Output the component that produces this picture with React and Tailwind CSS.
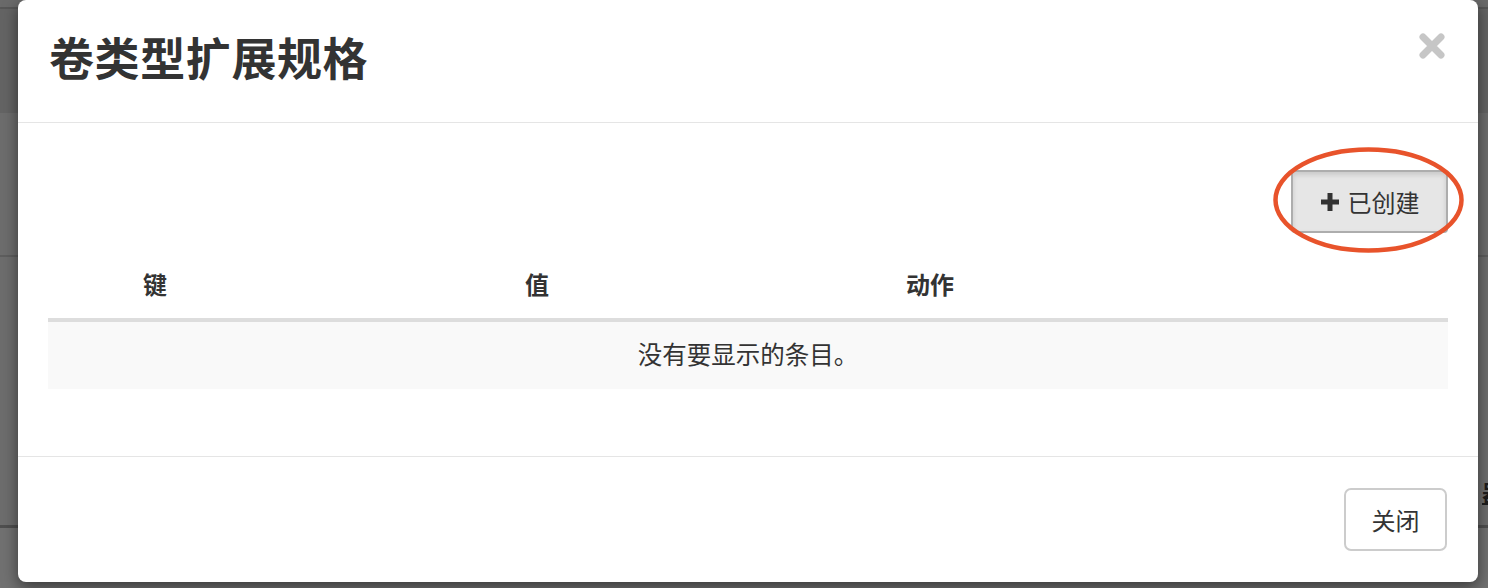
import React from "react";

const FONT = "font-['Noto_Sans_CJK_SC','Liberation_Sans',sans-serif]";

function CloseIcon() {
  return (
    <svg width="28" height="28" viewBox="0 0 28 28" className="block">
      <path d="M5 5L23 23M23 5L5 23" stroke="#c6c6c6" strokeWidth="7" strokeLinecap="round" />
    </svg>
  );
}

function PlusIcon() {
  return (
    <svg width="20" height="20" viewBox="0 0 20 20" className="block">
      <path d="M7.5 1h5v6.5H19v5h-6.5V19h-5v-6.5H1v-5h6.5z" fill="#333" />
    </svg>
  );
}

export default function App() {
  return (
    <div className={`relative h-[588px] w-[1488px] overflow-hidden bg-[#6d6d6d] ${FONT}`}>
      {/* page behind the overlay */}
      <div className="flex flex-col">
        <div className="h-[9px] border-b-2 border-[#575757] bg-[#6a6a6a]" />
        <div className="h-[104px] bg-[#646464]" />
        <div className="h-[144px] border-b-2 border-[#5e5e5e]" />
        <div className="h-[222px]" />
        <div className="flex h-[26px] items-center justify-end">
          <span className="mr-[-16px] border-b-2 border-[#1c1c1c] text-[22px] font-bold leading-[24px] text-[#1c1c1c]">器</span>
        </div>
        <div className="h-[20px]" />
        <div className="h-[3px] bg-[#4f4f4f]" />
        <div className="h-[60px] bg-[#717171]" />
      </div>

      {/* modal */}
      <div className="absolute left-[18px] top-0 flex h-[582px] w-[1460px] flex-col rounded-[8px] bg-white text-[#333] shadow-[0_5px_15px_rgba(0,0,0,0.5)]">
        <div className="flex h-[123px] items-center justify-between border-b border-[#e5e5e5] pl-[31px] pr-[32px]">
          <h4 className="mb-[10px] text-[45px] font-bold leading-none tracking-[0.6px]">卷类型扩展规格</h4>
          <button className="mt-[-30px]">
            <CloseIcon />
          </button>
        </div>

        <div className="flex flex-col px-[30px] pt-[47px] pb-[67px]">
          <div className="flex justify-end">
            <div className="relative">
              <button className="flex h-[63px] w-[157px] items-center justify-center gap-[8px] rounded-[4px] border-2 border-[#adadad] bg-[#e6e6e6] text-[24px] shadow-[inset_0_3px_5px_rgba(0,0,0,0.125)]">
                <PlusIcon />
                <span>已创建</span>
              </button>
              <svg
                width="191"
                height="106"
                viewBox="0 0 191 106"
                className="pointer-events-none absolute left-[-18px] top-[-23px]"
              >
                <ellipse cx="95.5" cy="53" rx="93" ry="50.5" fill="none" stroke="#e8532b" strokeWidth="4.5" />
              </svg>
            </div>
          </div>

          <div className="mt-[20px] flex h-[69px] items-center border-b-4 border-[#dddddd] pb-[4px] text-[24px] font-bold">
            <div className="w-[382px] pl-[95px]">键</div>
            <div className="w-[381px] pl-[95px]">值</div>
            <div className="w-[381px] pl-[95px]">动作</div>
          </div>
          <div className="flex h-[67px] items-center justify-center bg-[#f9f9f9] pb-[3px] text-[24.5px]">
            没有要显示的条目。
          </div>
        </div>

        <div className="flex justify-end border-t border-[#e5e5e5] px-[31px] pt-[31px]">
          <button className="flex h-[63px] w-[103px] items-center justify-center rounded-[7px] border-2 border-[#cccccc] bg-white text-[24px]">
            关闭
          </button>
        </div>
      </div>
    </div>
  );
}
